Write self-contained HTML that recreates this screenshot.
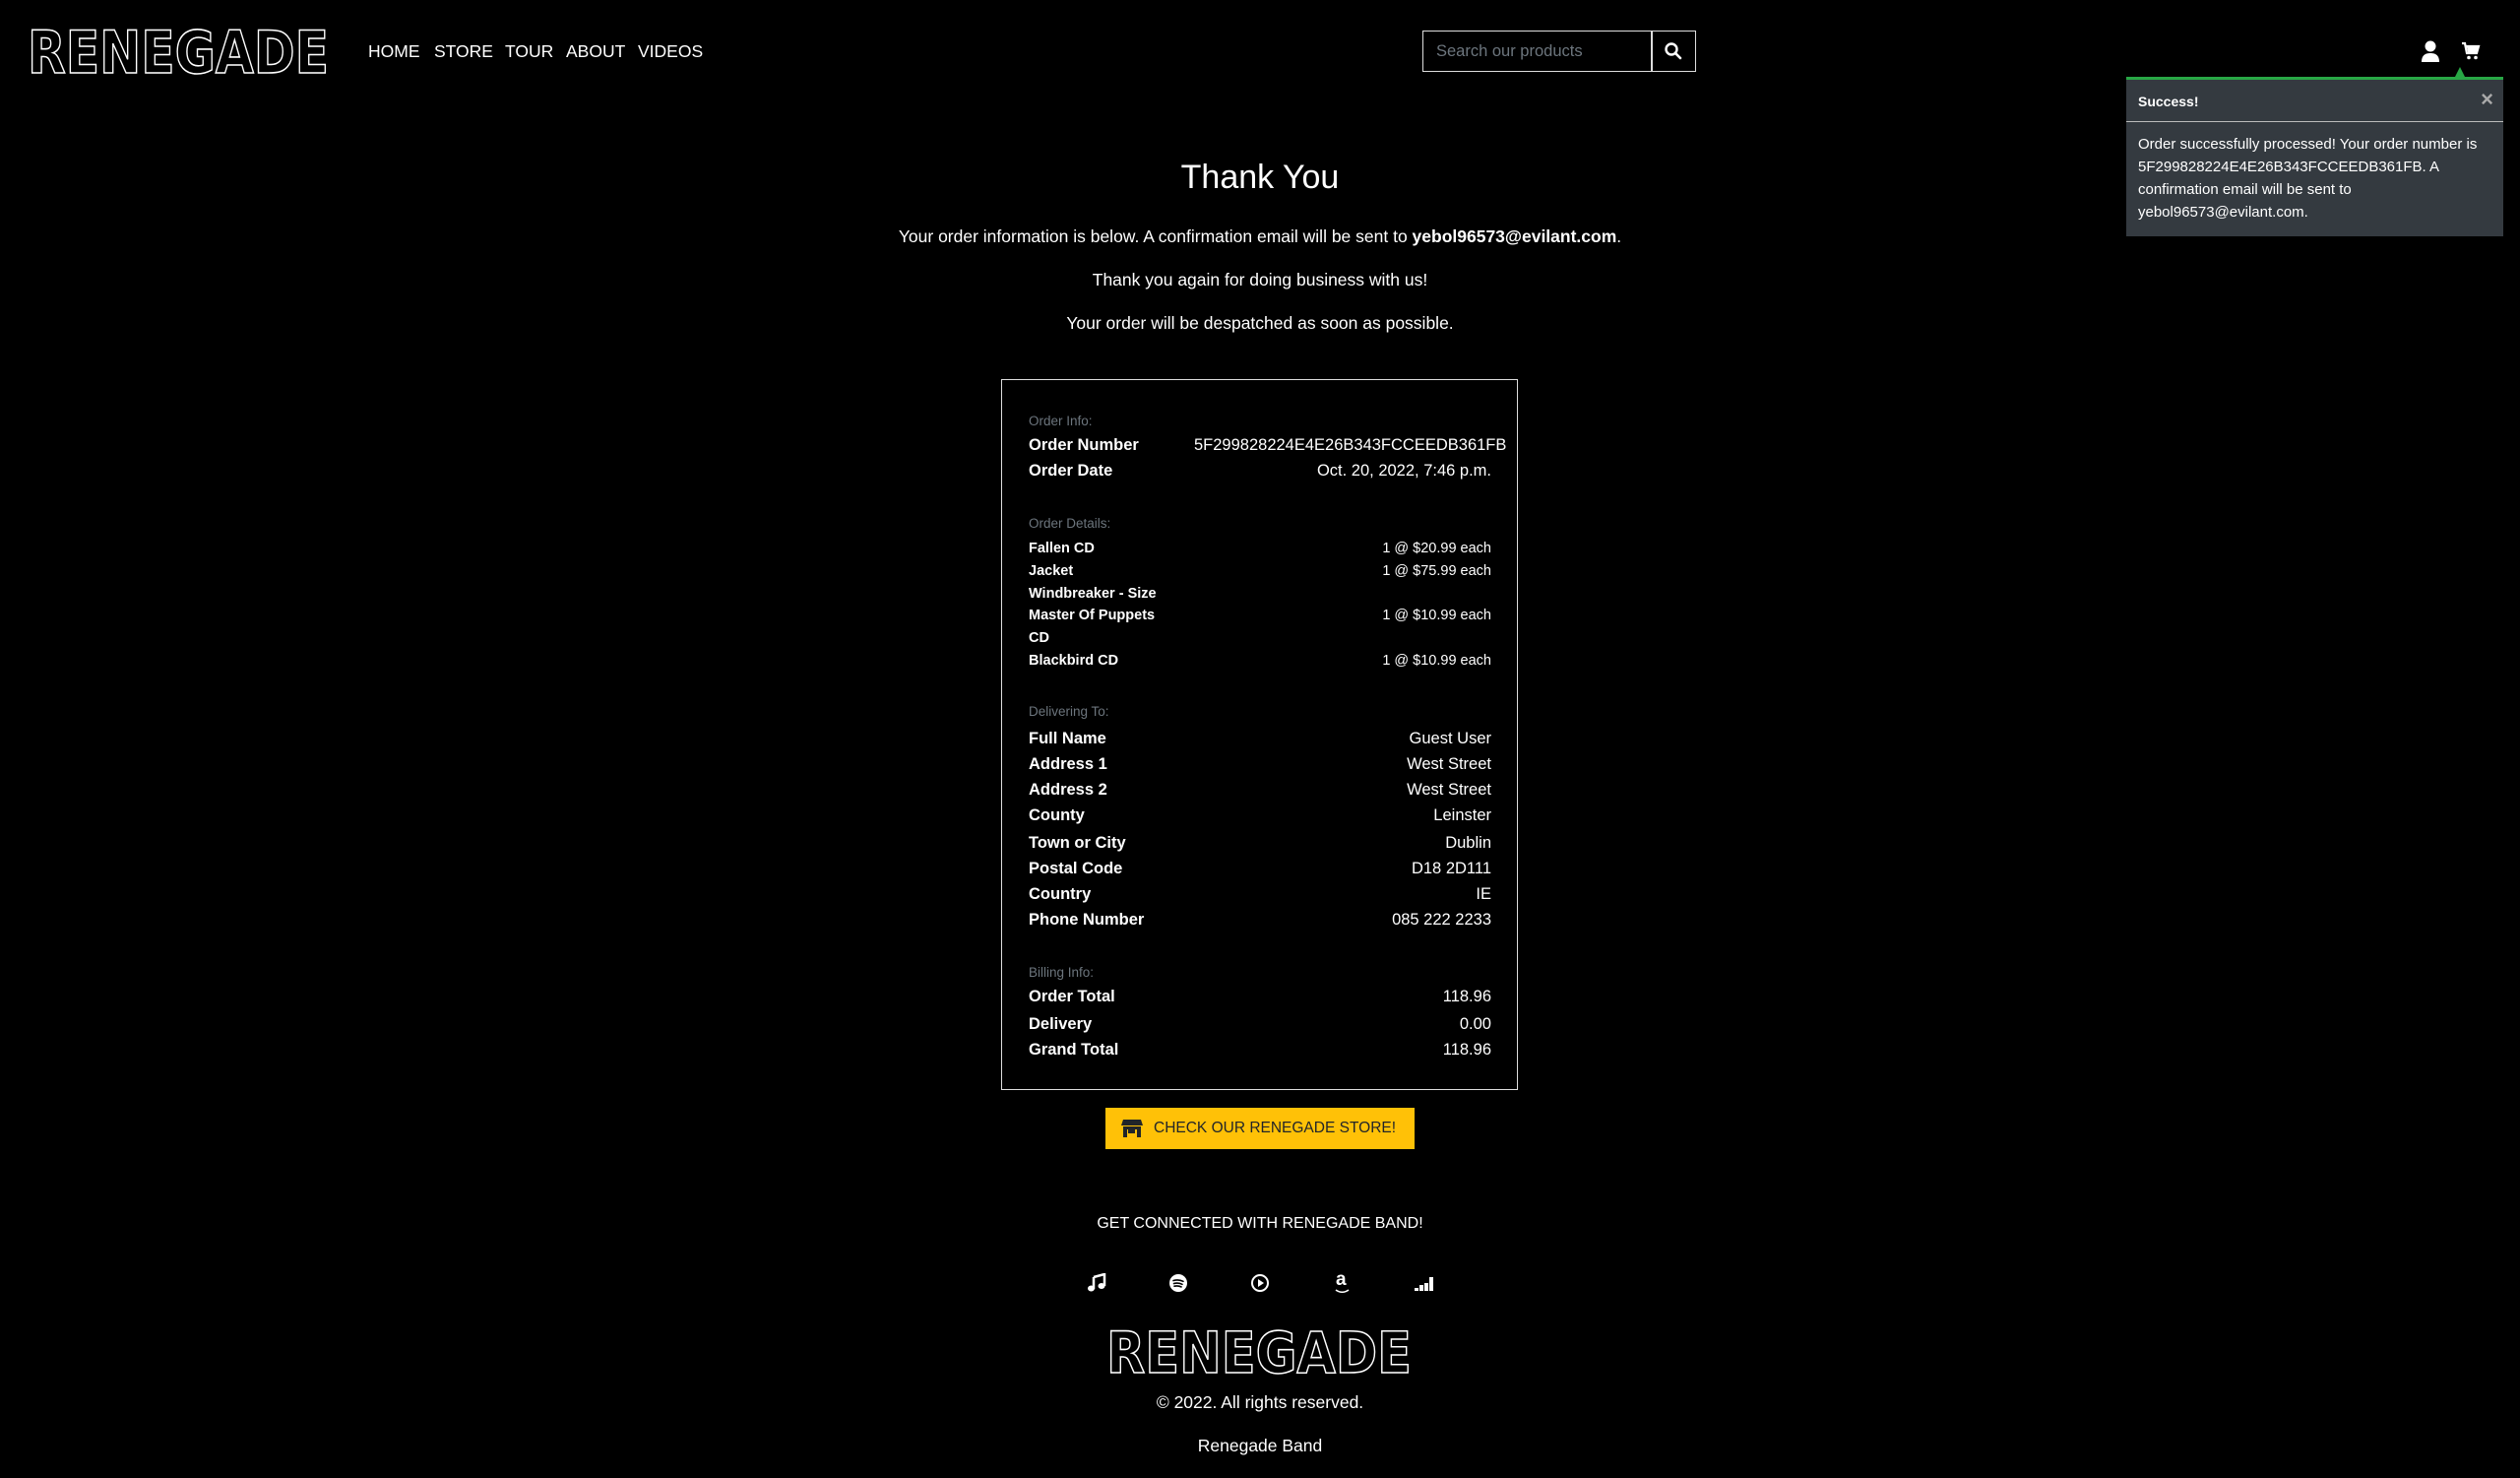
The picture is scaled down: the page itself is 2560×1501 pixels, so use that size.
<!DOCTYPE html>
<html><head><meta charset="utf-8">
<style>
*{margin:0;padding:0;box-sizing:border-box}
html,body{width:2560px;height:1501px;background:#000;color:#fff;font-family:"Liberation Sans",Arial,sans-serif;overflow:hidden}
.a{position:absolute;white-space:nowrap}
.nav{top:41px;font-size:17.5px;line-height:22px}
.c{left:0;width:2560px;text-align:center}
.row{position:absolute;left:1045px;width:470px;height:24px;line-height:24px;font-size:16.5px}
.row b{position:absolute;left:0}
.row span{position:absolute;right:0}
.sm{font-size:14.5px;line-height:20px;height:20px}
.hd{position:absolute;left:1045px;font-size:13.5px;color:#6c757d;line-height:18px}
</style></head><body>

<svg class="a" style="left:26px;top:22px" width="312" height="62" viewBox="0 0 312 62">
<text x="2" y="52" font-family="DejaVu Sans" font-weight="bold" font-size="60" fill="none" stroke="#fff" stroke-width="1.6" textLength="306" lengthAdjust="spacingAndGlyphs">RENEGADE</text>
</svg>

<div class="a nav" style="left:374px">HOME</div>
<div class="a nav" style="left:441px">STORE</div>
<div class="a nav" style="left:513px">TOUR</div>
<div class="a nav" style="left:575px">ABOUT</div>
<div class="a nav" style="left:648px">VIDEOS</div>

<div class="a" style="left:1445px;top:31px;width:278px;height:42px;border:1.5px solid #ddd"></div>
<div class="a" style="left:1677px;top:31px;width:1.5px;height:42px;background:#ddd"></div>
<div class="a" style="left:1459px;top:43px;font-size:16.5px;color:#6c757d">Search our products</div>
<svg class="a" style="left:1690px;top:42px" width="20" height="20" viewBox="0 0 20 20"><circle cx="8" cy="8" r="5.5" fill="none" stroke="#fff" stroke-width="2.4"/><path d="M12 12l5 5" stroke="#fff" stroke-width="2.6" stroke-linecap="round"/></svg>

<svg class="a" style="left:2458px;top:41px" width="22" height="23" viewBox="0 0 22 23"><circle cx="11" cy="6" r="5.5" fill="#fff"/><path d="M2 22c0-7 4-9 9-9s9 2 9 9z" fill="#fff"/></svg>
<svg class="a" style="left:2500px;top:42px" width="20" height="20" viewBox="0 0 20 20"><path d="M1 2h3l2 10h10l2-7H5" fill="none" stroke="#fff" stroke-width="2.2"/><path d="M6 6h11l-1.5 5H7z" fill="#fff"/><circle cx="8" cy="16.5" r="1.8" fill="#fff"/><circle cx="15" cy="16.5" r="1.8" fill="#fff"/></svg>

<div class="a" style="left:2494px;top:68px;width:0;height:0;border-left:5px solid transparent;border-right:5px solid transparent;border-bottom:10px solid #28a745"></div>
<div class="a" style="left:2160px;top:78px;width:383px;height:162px;background:#343a40;border-top:3px solid #28a745">
 <div style="position:absolute;left:12px;top:14px;font-size:14px;font-weight:bold">Success!</div>
 <div style="position:absolute;right:10px;top:7px;font-size:22px;color:#aaa;font-weight:bold">×</div>
 <div style="position:absolute;left:0;top:42px;width:100%;height:1px;background:#bbb"></div>
 <div style="position:absolute;left:12px;top:54px;font-size:15px;line-height:23px;white-space:normal;width:362px">Order successfully processed! Your order number is 5F299828224E4E26B343FCCEEDB361FB. A confirmation email will be sent to yebol96573@evilant.com.</div>
</div>

<div class="a c" style="top:161px;font-size:34px;font-weight:500">Thank You</div>
<div class="a c" style="top:230px;font-size:17.5px">Your order information is below. A confirmation email will be sent to <b>yebol96573@evilant.com</b>.</div>
<div class="a c" style="top:274px;font-size:17.5px">Thank you again for doing business with us!</div>
<div class="a c" style="top:318px;font-size:17.5px">Your order will be despatched as soon as possible.</div>

<div class="a" style="left:1017px;top:385px;width:525px;height:722px;border:1.5px solid #ddd"></div>

<div class="hd" style="top:419px">Order Info:</div>
<div class="row" style="top:440px"><b>Order Number</b><span style="left:168px;right:auto">5F299828224E4E26B343FCCEEDB361FB</span></div>
<div class="row" style="top:466px"><b>Order Date</b><span>Oct. 20, 2022, 7:46 p.m.</span></div>

<div class="hd" style="top:523px">Order Details:</div>
<div class="row sm" style="top:547px"><b>Fallen CD</b><span>1 @ $20.99 each</span></div>
<div class="row sm" style="top:570px"><b>Jacket</b><span>1 @ $75.99 each</span></div>
<div class="row sm" style="top:593px"><b>Windbreaker - Size</b></div>
<div class="row sm" style="top:615px"><b>Master Of Puppets</b><span>1 @ $10.99 each</span></div>
<div class="row sm" style="top:638px"><b>CD</b></div>
<div class="row sm" style="top:661px"><b>Blackbird CD</b><span>1 @ $10.99 each</span></div>

<div class="hd" style="top:714px">Delivering To:</div>
<div class="row" style="top:738px"><b>Full Name</b><span>Guest User</span></div>
<div class="row" style="top:764px"><b>Address 1</b><span>West Street</span></div>
<div class="row" style="top:790px"><b>Address 2</b><span>West Street</span></div>
<div class="row" style="top:816px"><b>County</b><span>Leinster</span></div>
<div class="row" style="top:844px"><b>Town or City</b><span>Dublin</span></div>
<div class="row" style="top:870px"><b>Postal Code</b><span>D18 2D111</span></div>
<div class="row" style="top:896px"><b>Country</b><span>IE</span></div>
<div class="row" style="top:922px"><b>Phone Number</b><span>085 222 2233</span></div>

<div class="hd" style="top:979px">Billing Info:</div>
<div class="row" style="top:1000px"><b>Order Total</b><span>118.96</span></div>
<div class="row" style="top:1028px"><b>Delivery</b><span>0.00</span></div>
<div class="row" style="top:1054px"><b>Grand Total</b><span>118.96</span></div>

<div class="a" style="left:1123px;top:1125px;width:314px;height:42px;background:#ffc107;color:#212529;font-size:15.5px;line-height:42px">
 <svg style="position:absolute;left:16px;top:12px" width="22" height="18" viewBox="0 0 22 18"><path d="M2 0h18l2 6H0z" fill="#212529"/><path d="M2 7h18v11h-4V10H6v8H2z" fill="#212529"/><rect x="7" y="10" width="7" height="4" fill="#212529"/></svg>
 <span style="position:absolute;left:49px">CHECK OUR RENEGADE STORE!</span>
</div>

<div class="a c" style="top:1234px;font-size:16px">GET CONNECTED WITH RENEGADE BAND!</div>

<svg class="a" style="left:1104px;top:1293px" width="20" height="20" viewBox="0 0 20 20"><path d="M7 4l11-3v12" fill="none" stroke="#fff" stroke-width="2.5"/><ellipse cx="4.5" cy="15.5" rx="3.5" ry="3" fill="#fff"/><ellipse cx="15" cy="13" rx="3.5" ry="3" fill="#fff"/><path d="M7 4v12" stroke="#fff" stroke-width="2.5"/></svg>
<svg class="a" style="left:1187px;top:1293px" width="20" height="20" viewBox="0 0 20 20"><circle cx="10" cy="10" r="9" fill="#fff"/><path d="M5 7.5c3.5-1 7-.7 10 .8M5.5 10.5c3-.8 6-.5 8.5.8M6 13.2c2.5-.6 4.8-.3 7 .7" stroke="#000" stroke-width="1.6" fill="none" stroke-linecap="round"/></svg>
<svg class="a" style="left:1270px;top:1293px" width="20" height="20" viewBox="0 0 20 20"><circle cx="10" cy="10" r="8" fill="none" stroke="#fff" stroke-width="2"/><path d="M8 6l6 4-6 4z" fill="#fff"/></svg>
<div class="a" style="left:1357px;top:1290px;font-size:19px;font-weight:bold;line-height:20px">a</div>
<svg class="a" style="left:1356px;top:1309px" width="16" height="5" viewBox="0 0 16 5"><path d="M1 1c4 3 9 3 13 0" stroke="#fff" stroke-width="1.6" fill="none"/></svg>
<svg class="a" style="left:1437px;top:1295px" width="20" height="16" viewBox="0 0 20 16"><g fill="#fff"><rect x="0" y="13" width="4" height="3"/><rect x="5" y="10" width="4" height="6"/><rect x="10" y="8" width="4" height="8"/><rect x="15" y="2" width="4" height="14"/></g></svg>

<svg class="a" style="left:1122px;top:1342px" width="314" height="60" viewBox="0 0 314 60">
<text x="2" y="52" font-family="DejaVu Sans" font-weight="bold" font-size="58" fill="none" stroke="#fff" stroke-width="1.6" textLength="310" lengthAdjust="spacingAndGlyphs">RENEGADE</text>
</svg>

<div class="a c" style="top:1414px;font-size:17.5px">© 2022. All rights reserved.</div>
<div class="a c" style="top:1458px;font-size:17.5px">Renegade Band</div>
</body></html>
